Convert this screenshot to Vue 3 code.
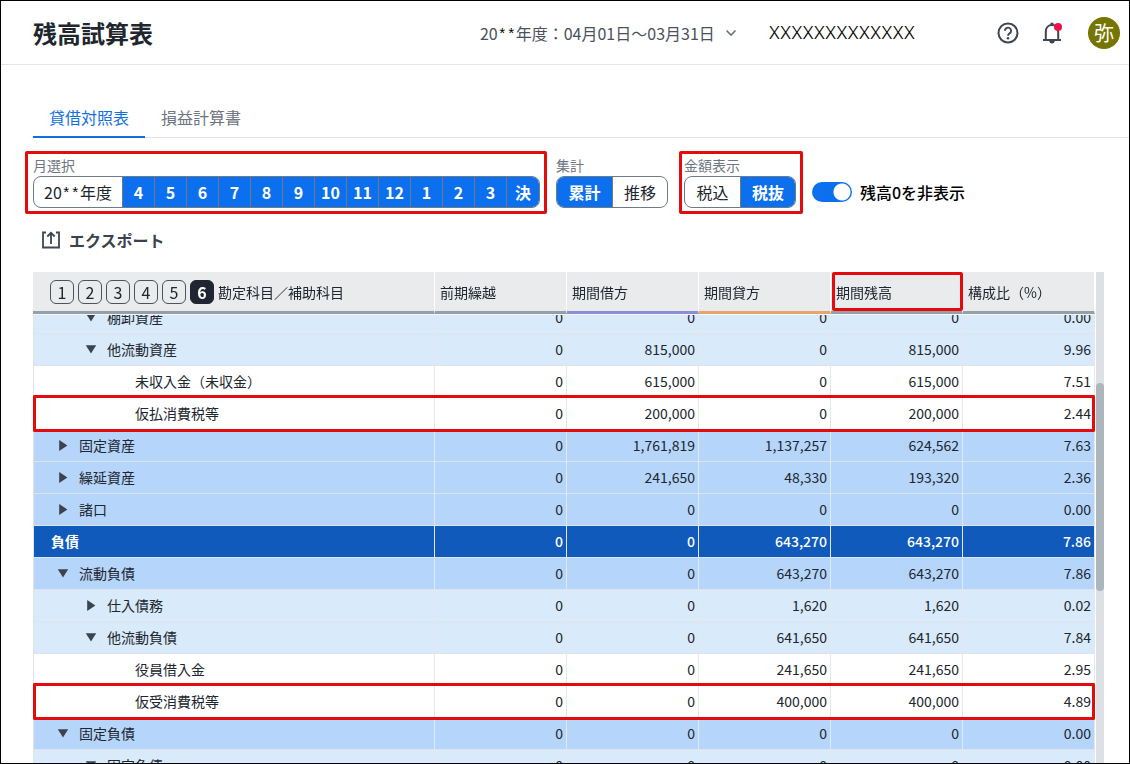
<script setup>
import { onMounted, ref } from 'vue'

const months = ['4', '5', '6', '7', '8', '9', '10', '11', '12', '1', '2', '3', '決']
const levels = [1, 2, 3, 4, 5, 6]
const columns = [
  { label: '前期繰越' },
  { label: '期間借方', tone: 'debit' },
  { label: '期間貸方', tone: 'credit' },
  { label: '期間残高', marked: true },
  { label: '構成比（%）' },
]
const rows = [
  { name: '棚卸資産', level: 2, open: true, values: ['0', '0', '0', '0', '0.00'] },
  { name: '他流動資産', level: 2, open: true, values: ['0', '815,000', '0', '815,000', '9.96'] },
  { name: '未収入金（未収金）', level: 3, values: ['0', '615,000', '0', '615,000', '7.51'] },
  { name: '仮払消費税等', level: 3, marked: true, values: ['0', '200,000', '0', '200,000', '2.44'] },
  { name: '固定資産', level: 1, open: false, values: ['0', '1,761,819', '1,137,257', '624,562', '7.63'] },
  { name: '繰延資産', level: 1, open: false, values: ['0', '241,650', '48,330', '193,320', '2.36'] },
  { name: '諸口', level: 1, open: false, values: ['0', '0', '0', '0', '0.00'] },
  { name: '負債', level: 0, values: ['0', '0', '643,270', '643,270', '7.86'] },
  { name: '流動負債', level: 1, open: true, values: ['0', '0', '643,270', '643,270', '7.86'] },
  { name: '仕入債務', level: 2, open: false, values: ['0', '0', '1,620', '1,620', '0.02'] },
  { name: '他流動負債', level: 2, open: true, values: ['0', '0', '641,650', '641,650', '7.84'] },
  { name: '役員借入金', level: 3, values: ['0', '0', '241,650', '241,650', '2.95'] },
  { name: '仮受消費税等', level: 3, marked: true, values: ['0', '0', '400,000', '400,000', '4.89'] },
  { name: '固定負債', level: 1, open: true, values: ['0', '0', '0', '0', '0.00'] },
  { name: '固定負債', level: 2, open: true, values: ['0', '0', '0', '0', '0.00'] },
]

const hideZero = ref(true)
const scroller = ref(null)
onMounted(() => {
  scroller.value.scrollTop = 12
})
</script>

<template>
  <div class="page">
    <header class="header">
      <h1 class="title">残高試算表</h1>
      <button class="period" type="button">
        <span>20<span class="mask">**</span>年度：04月01日～03月31日</span>
        <svg width="12" height="8" viewBox="0 0 12 8"><path d="M1.5 1.5 6 6l4.500-4.500" fill="none" stroke="#6b727c" stroke-width="1.600" /></svg>
      </button>
      <span class="company">XXXXXXXXXXXXX</span>
      <div class="tools">
        <button class="tool" type="button" aria-label="ヘルプ">
          <svg width="24" height="24" viewBox="0 0 24 24" fill="none" stroke="#3e4652">
            <circle cx="12" cy="12" r="9.500" stroke-width="2" />
            <path d="M8.900 9.800a3.100 3.100 0 1 1 4.700 2.600c-1.100.7-1.600 1.200-1.600 2.300" stroke-width="1.900" />
            <circle cx="12" cy="17.300" r="1.300" fill="#3e4652" stroke="none" />
          </svg>
        </button>
        <button class="tool" type="button" aria-label="通知">
          <svg width="24" height="24" viewBox="0 0 24 24">
            <path d="M3 19h18M5.800 19v-8.200C5.800 6.800 8.300 4 12 4s6.200 2.800 6.200 6.800V19" fill="none" stroke="#3e4652" stroke-width="2" />
            <path d="M10.500 1.800h3V4h-3zM9.300 20h5.400a2.700 2.400 0 0 1-5.400 0z" fill="#3e4652" />
            <circle cx="18" cy="6" r="4" fill="#f0114a" />
          </svg>
        </button>
        <button class="avatar" type="button">弥</button>
      </div>
    </header>

    <main class="main">
      <nav class="tabs">
        <a class="tab active" href="#bs">貸借対照表</a>
        <a class="tab" href="#pl">損益計算書</a>
      </nav>

      <div class="filters">
        <div class="group marked wide" role="group" aria-labelledby="label-month">
          <span id="label-month" class="label">月選択</span>
          <div class="segments">
            <button class="segment year" type="button">20<span class="mask">**</span>年度</button>
            <button v-for="m in months" :key="m" class="segment month on" type="button">{{ m }}</button>
          </div>
        </div>
        <div class="group" role="group" aria-labelledby="label-sum">
          <span id="label-sum" class="label">集計</span>
          <div class="segments">
            <button class="segment half on" type="button">累計</button>
            <button class="segment half" type="button">推移</button>
          </div>
        </div>
        <div class="group marked" role="group" aria-labelledby="label-tax">
          <span id="label-tax" class="label">金額表示</span>
          <div class="segments">
            <button class="segment half" type="button">税込</button>
            <button class="segment half on" type="button">税抜</button>
          </div>
        </div>
        <label class="toggle">
          <input v-model="hideZero" class="switch" type="checkbox" role="switch" />
          <span>残高0を非表示</span>
        </label>
      </div>

      <button class="export" type="button">
        <svg width="20" height="20" viewBox="0 0 20 20" fill="none" stroke="#3e4652" stroke-width="1.800">
          <path d="M5 2.500H2v15h16v-15h-3M10 14V3M6.300 6.500 10 2.800l3.700 3.700" />
        </svg>
        <span>エクスポート</span>
      </button>

      <div class="sheet">
        <div ref="scroller" class="scroller">
          <table class="table">
            <colgroup>
              <col />
              <col v-for="c in columns" :key="c.label" class="amount-col" />
            </colgroup>
            <thead>
              <tr>
                <th scope="col">
                  <div class="account-head">
                    <button v-for="n in levels" :key="n" class="level" :class="{ current: n === 6 }" type="button">{{ n }}</button>
                    <span>勘定科目／補助科目</span>
                  </div>
                </th>
                <th v-for="c in columns" :key="c.label" scope="col" :class="[c.tone, { marked: c.marked }]">{{ c.label }}</th>
              </tr>
            </thead>
            <tbody>
              <tr v-for="(r, i) in rows" :key="i" :class="['level-' + r.level, { marked: r.marked }]">
                <th scope="row">
                  <div class="account">
                    <button v-if="r.open !== undefined" class="fold" type="button" :aria-expanded="r.open" :aria-label="r.name">
                      <svg width="16" height="16" viewBox="0 0 16 16" fill="#3b434e">
                        <path v-if="r.open" d="M2.800 3.300h10.400L8 11.500z" />
                        <path v-else d="M4.200 2v11l8.200-5.500z" />
                      </svg>
                    </button>
                    <span class="name">{{ r.name }}</span>
                  </div>
                </th>
                <td v-for="(v, j) in r.values" :key="j">{{ v }}</td>
              </tr>
            </tbody>
          </table>
        </div>
        <div class="track"><div class="thumb"></div></div>
      </div>
    </main>
  </div>
</template>

<style>
body {
  margin: 0;
}
</style>

<style scoped>
.page {
  box-sizing: border-box;
  height: 100vh;
  display: flex;
  flex-direction: column;
  overflow: hidden;
  border: 1px solid #000;
  background: #fff;
  color: #20262e;
  font-family: "Noto Sans CJK JP", sans-serif;
  font-size: 14px;
}
button {
  margin: 0;
  padding: 0;
  border: 0;
  background: none;
  color: inherit;
  font: inherit;
  cursor: pointer;
}
svg {
  display: block;
  flex: none;
}
.header {
  display: flex;
  align-items: center;
  flex: none;
  height: 63px;
  padding: 0 9px 0 32px;
  border-bottom: 1px solid #e2e4e7;
}
.title {
  margin: 0 auto 0 0;
  font-size: 24px;
  line-height: 32px;
  font-weight: 700;
}
.period {
  display: flex;
  align-items: center;
  gap: 10px;
  margin-right: 32px;
  color: #4a515c;
  font-size: 16px;
  line-height: 24px;
}
.mask {
  color: #000;
  font-family: "Liberation Mono", monospace;
  font-size: 15px;
  line-height: 1;
  vertical-align: middle;
}
.company {
  color: #000;
  font-family: Inter, sans-serif;
  font-size: 17px;
  font-weight: 300;
}
.tools {
  display: flex;
  align-items: center;
  margin-left: 81px;
}
.tool {
  width: 24px;
  height: 24px;
  margin-right: 20px;
}
.tool + .tool {
  margin-right: 24px;
}
.avatar {
  width: 32px;
  height: 32px;
  border-radius: 50%;
  background: #757500;
  color: #fff;
  font-size: 20px;
  line-height: 32px;
}
.main {
  display: flex;
  flex-direction: column;
  flex: 1;
  min-height: 0;
  padding: 33px 0 0 32px;
}
.tabs {
  display: flex;
  flex: none;
  box-shadow: inset 0 -1px #e2e4e7;
}
.tab {
  padding: 0 16px;
  border-bottom: 2px solid transparent;
  color: #6e7681;
  font-size: 16px;
  line-height: 38px;
  text-decoration: none;
}
.tab.active {
  border-color: #136fe0;
  color: #136fe0;
}
.filters {
  display: flex;
  align-items: flex-end;
  flex: none;
  gap: 16px;
  padding-top: 18px;
}
.group {
  position: relative;
}
.group.marked::after {
  content: "";
  position: absolute;
  inset: -5px -7px -6px -5px;
  border: 3px solid #e30b0c;
  border-radius: 2px;
  pointer-events: none;
}
.group.wide::after {
  left: -8px;
}
.label {
  display: block;
  padding-bottom: 2px;
  color: #6e7681;
  line-height: 18px;
}
.segments {
  display: flex;
  box-sizing: border-box;
  height: 32px;
  overflow: hidden;
  border: 1px solid #6f7a87;
  border-radius: 8px;
}
.segment {
  box-sizing: border-box;
  color: #20262e;
  font-size: 16px;
  line-height: 30px;
}
.segment + .segment {
  border-left: 1px solid #6f7a87;
}
.segment.on {
  background: #0b6fee;
  color: #fff;
  font-weight: 700;
}
.year {
  width: 88px;
}
.month {
  width: 32px;
}
.month:last-child {
  width: 33px;
}
.half {
  width: 55px;
}
.toggle {
  display: flex;
  align-items: center;
  gap: 8px;
  height: 32px;
  color: #000;
  font-size: 16px;
  font-weight: 500;
}
.switch {
  appearance: none;
  width: 40px;
  height: 20px;
  margin: 0;
  border-radius: 10px;
  background: radial-gradient(circle at 30px 10px, #fff 8px, #0b6fee 9px);
}
.export {
  display: flex;
  align-items: center;
  align-self: flex-start;
  flex: none;
  gap: 8px;
  margin: 20px 0 0 8px;
  color: #3a424d;
  font-size: 16px;
  line-height: 24px;
  font-weight: 700;
}
.sheet {
  display: flex;
  flex: 1;
  gap: 1px;
  min-height: 0;
  margin: 20px 25px 0 0;
}
.scroller {
  flex: 1;
  overflow-y: auto;
  scrollbar-width: none;
}
.table {
  width: 100%;
  table-layout: fixed;
  border-collapse: separate;
  border-spacing: 0;
  line-height: 20px;
}
.amount-col {
  width: 132px;
}
th {
  padding: 0;
  font-weight: 400;
  text-align: left;
}
thead th {
  position: sticky;
  top: 0;
  z-index: 2;
  box-sizing: border-box;
  height: 42px;
  padding-left: 5px;
  border-right: 1px solid #fff;
  border-bottom: 3px solid #969ea7;
  background: #e9ebed;
  box-shadow: 0 1px #f4f8fc;
}
thead th.debit {
  border-bottom-color: #8a90d6;
}
thead th.credit {
  border-bottom-color: #e5a56d;
}
thead th.marked {
  z-index: 3;
}
thead th.marked::after {
  content: "";
  position: absolute;
  inset: 0 -1px 0 1px;
  border: 3px solid #e30b0c;
  border-radius: 2px;
}
.account-head {
  display: flex;
  align-items: center;
  gap: 4px;
  padding-left: 12px;
}
.level {
  box-sizing: border-box;
  flex: none;
  width: 24px;
  height: 24px;
  border: 1px solid #4b535e;
  border-radius: 6px;
  font-size: 16px;
  line-height: 22px;
}
.level.current {
  border-color: #1f2631;
  background: #1f2631;
  color: #fff;
  font-weight: 700;
}
tbody th,
tbody td {
  box-sizing: border-box;
  height: 32px;
  border-right: 1px solid #e3e8ef;
  border-bottom: 1px solid #dde4ec;
}
tbody th {
  border-left: 1px solid #dde4ec;
}
tbody td {
  padding: 0 3px 2px 0;
  text-align: right;
}
.account {
  display: flex;
  align-items: center;
  gap: 8px;
}
.name {
  padding-bottom: 2px;
}
.fold {
  width: 16px;
  height: 16px;
}
.level-0 {
  background: #0f5aba;
  color: #fff;
  font-weight: 500;
}
.level-0 th {
  padding-left: 17px;
  font-weight: 700;
}
.level-1 {
  background: #b6d5fb;
}
.level-1 th {
  padding-left: 21px;
}
.level-2 {
  background: #d9eafb;
}
.level-2 th {
  padding-left: 49px;
}
.level-3 th {
  padding-left: 101px;
}
tr.marked > * {
  position: relative;
  z-index: 1;
}
tr.marked > *::after {
  content: "";
  position: absolute;
  inset: -3px -1px -3px 0;
  border: 0 solid #e30b0c;
  border-width: 3px 0;
  pointer-events: none;
}
tr.marked > *:first-child::after {
  left: -1px;
  border-left-width: 3px;
  border-radius: 2px 0 0 2px;
}
tr.marked > *:last-child::after {
  border-right-width: 3px;
  border-radius: 0 2px 2px 0;
}
.track {
  display: flex;
  flex-direction: column;
  width: 8px;
  background: #dde1e5;
}
.thumb {
  height: 208px;
  margin-top: 111px;
  border-radius: 4px;
  background: #adb5bd;
}
</style>
